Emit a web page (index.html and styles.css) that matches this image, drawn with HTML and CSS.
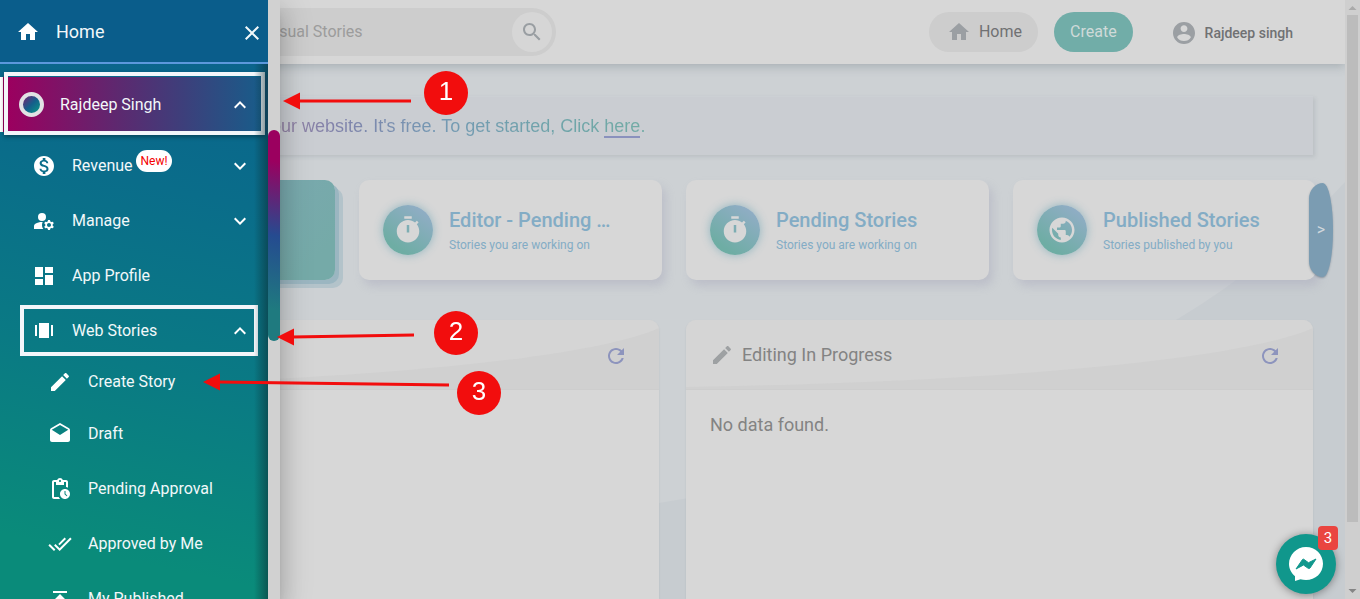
FILE: index.html
```html
<!DOCTYPE html>
<html lang="en">
<head>
<meta charset="utf-8">
<meta name="viewport" content="width=device-width, initial-scale=1">
<title>Visual Stories</title>
<link rel="stylesheet" href="styles.css">
</head>
<body>
<svg class="defs" aria-hidden="true">
  <symbol id="home" viewBox="0 0 24 24"><path d="M10 20v-6h4v6h5v-8h3L12 3 2 12h3v8z"/></symbol>
  <symbol id="up" viewBox="0 0 24 24"><path d="M12 8l-6 6 1.410 1.410L12 10.830l4.590 4.580L18 14z"/></symbol>
  <symbol id="down" viewBox="0 0 24 24"><path d="M16.590 8.590L12 13.170 7.410 8.590 6 10l6 6 6-6z"/></symbol>
  <symbol id="pencil" viewBox="0 0 24 24"><path d="M3 17.250V21h3.750L17.810 9.940l-3.750-3.750L3 17.250zM20.710 7.040c.39-.39.39-1.020 0-1.410l-2.340-2.340c-.39-.39-1.020-.39-1.410 0l-1.830 1.830 3.750 3.750 1.830-1.830z"/></symbol>
  <symbol id="refresh" viewBox="0 0 24 24"><path d="M17.650 6.350C16.200 4.900 14.210 4 12 4c-4.420 0-7.990 3.580-7.990 8s3.570 8 7.990 8c3.730 0 6.840-2.550 7.730-6h-2.080c-.82 2.330-3.040 4-5.650 4-3.310 0-6-2.690-6-6s2.690-6 6-6c1.660 0 3.140.69 4.220 1.780L13 11h7V4l-2.350 2.350z"/></symbol>
  <symbol id="timer" viewBox="0 0 24 24"><path fill-rule="evenodd" d="M15 1H9v2h6V1zm-4 13h2V8h-2v6zm8.030-6.610l1.420-1.420c-.43-.51-.9-.99-1.410-1.410l-1.420 1.420C16.070 4.740 14.120 4 12 4c-4.970 0-9 4.030-9 9s4.020 9 9 9 9-4.030 9-9c0-2.120-.74-4.070-1.970-5.610z"/></symbol>
  <symbol id="globe" viewBox="0 0 24 24"><path d="M12 2C6.480 2 2 6.480 2 12s4.480 10 10 10 10-4.480 10-10S17.520 2 12 2zm-1 17.930c-3.950-.49-7-3.850-7-7.930 0-.62.080-1.210.21-1.790L9 15v1c0 1.100.9 2 2 2v1.930zm6.900-2.540c-.26-.81-1-1.390-1.900-1.390h-1v-3c0-.55-.45-1-1-1H8v-2h2c.55 0 1-.45 1-1V7h2c1.100 0 2-.9 2-2v-.41c2.930 1.190 5 4.060 5 7.410 0 2.080-.8 3.970-2.100 5.390z"/></symbol>
</svg>

<div class="app">
  <div class="page">
    <header class="topbar">
      <form class="search" role="search">
        <input class="search-input" type="text" placeholder="Search Visual Stories" aria-label="Search Visual Stories">
        <button class="search-button" type="button" aria-label="Search">
          <svg class="icon" viewBox="0 0 24 24"><path d="M15.500 14h-.79l-.28-.27C15.410 12.590 16 11.110 16 9.500 16 5.910 13.090 3 9.500 3S3 5.910 3 9.500 5.910 16 9.500 16c1.610 0 3.090-.59 4.230-1.570l.27.28v.79l5 4.990L20.490 19l-4.990-5zm-6 0C7.010 14 5 11.990 5 9.500S7.010 5 9.500 5 14 7.010 14 9.500 11.990 14 9.500 14z"/></svg>
        </button>
      </form>
      <nav class="top-actions">
        <a class="pill pill-home" href="#"><svg class="icon"><use href="#home"/></svg>Home</a>
        <button class="pill create" type="button">Create</button>
        <a class="user" href="#">
          <svg class="icon" viewBox="0 0 24 24"><path d="M12 1C5.900 1 1 5.900 1 12s4.900 11 11 11 11-4.900 11-11S18.100 1 12 1zm0 3.300c1.900 0 3.400 1.500 3.400 3.400S13.900 11 12 11s-3.400-1.500-3.400-3.400S10.100 4.300 12 4.300zm0 15.700c-2.900 0-5.400-1.400-6.800-3.600 0-2.200 4.500-3.400 6.800-3.400s6.800 1.200 6.800 3.400C17.400 18.600 14.900 20 12 20z"/></svg>
          Rajdeep singh
        </a>
      </nav>
    </header>

    <main class="content">
      <svg class="wave" viewBox="0 0 1345 535" preserveAspectRatio="none" aria-hidden="true"><path d="M1345 118Q1270 200 1176 256C1010 356 850 408 659 439L0 520V535H1345Z"/></svg>
      <section class="banner">
        <p class="banner-text">Show visual stories on your website. It's free. To get started, Click <a class="banner-link" href="#">here</a>.</p>
      </section>

      <section class="slider" aria-label="Story summary">
        <article class="card card-active"></article>
        <article class="card">
          <span class="card-icon"><svg><use href="#timer"/></svg></span>
          <div class="card-body"><h2 class="card-title">Editor - Pending …</h2><p class="card-note">Stories you are working on</p></div>
        </article>
        <article class="card">
          <span class="card-icon"><svg><use href="#timer"/></svg></span>
          <div class="card-body"><h2 class="card-title">Pending Stories</h2><p class="card-note">Stories you are working on</p></div>
        </article>
        <article class="card">
          <span class="card-icon"><svg><use href="#globe"/></svg></span>
          <div class="card-body"><h2 class="card-title">Published Stories</h2><p class="card-note">Stories published by you</p></div>
        </article>
        <button class="next" type="button" aria-label="Next">&gt;</button>
      </section>

      <div class="panels">
        <section class="panel">
          <header class="panel-head">
            <svg class="panel-curve" viewBox="0 0 626 70" preserveAspectRatio="none" aria-hidden="true"><path d="M0 0H626V8C560 38 340 62 0 68Z"/></svg>
            <button class="refresh" type="button" aria-label="Refresh"><svg class="icon"><use href="#refresh"/></svg></button>
          </header>
        </section>
        <section class="panel">
          <header class="panel-head">
            <svg class="panel-curve" viewBox="0 0 626 70" preserveAspectRatio="none" aria-hidden="true"><path d="M0 0H626V8C560 38 340 62 0 68Z"/></svg>
            <h2 class="panel-title"><svg class="icon"><use href="#pencil"/></svg>Editing In Progress</h2>
            <button class="refresh" type="button" aria-label="Refresh"><svg class="icon"><use href="#refresh"/></svg></button>
          </header>
          <p class="panel-empty">No data found.</p>
        </section>
      </div>
    </main>
  </div>

  <div class="scrollbar" aria-hidden="true">
    <svg class="scroll-arrow" viewBox="0 0 15 15"><path d="M3.500 10L7.500 6l4 4z"/></svg>
    <div class="scroll-thumb"></div>
    <svg class="scroll-arrow scroll-arrow-down" viewBox="0 0 15 15"><path d="M3.500 5l4 4 4-4z"/></svg>
  </div>
</div>

<aside class="drawer">
  <div class="drawer-main">
    <header class="drawer-head">
      <a class="drawer-home" href="#"><svg class="icon"><use href="#home"/></svg>Home</a>
      <button class="drawer-close" type="button" aria-label="Close menu"><svg class="icon" viewBox="0 0 24 24"><path d="M19 6.410L17.590 5 12 10.590 6.410 5 5 6.410 10.590 12 5 17.590 6.410 19 12 13.410 17.590 19 19 17.590 13.410 12z"/></svg></button>
    </header>
    <nav class="menu">
      <button class="item item-user ring" type="button"><span class="avatar"></span><span class="label">Rajdeep Singh</span><svg class="icon"><use href="#up"/></svg></button>
      <button class="item" type="button">
        <svg class="icon" viewBox="0 0 24 24"><path d="M12 2C6.480 2 2 6.480 2 12s4.480 10 10 10 10-4.480 10-10S17.520 2 12 2zm1.410 16.090V20h-2.670v-1.930c-1.710-.36-3.160-1.460-3.270-3.400h1.960c.1 1.050.82 1.870 2.650 1.870 1.960 0 2.400-.98 2.400-1.590 0-.83-.44-1.610-2.670-2.140-2.480-.6-4.180-1.620-4.180-3.670 0-1.720 1.390-2.840 3.110-3.210V4h2.670v1.950c1.860.45 2.790 1.860 2.850 3.390H14.300c-.05-1.110-.64-1.870-2.220-1.870-1.500 0-2.400.68-2.400 1.640 0 .84.65 1.390 2.670 1.910s4.180 1.390 4.180 3.910c-.01 1.830-1.380 2.830-3.120 3.160z"/></svg>
        <span class="label">Revenue <span class="new">New!</span></span><svg class="icon"><use href="#down"/></svg>
      </button>
      <button class="item" type="button">
        <svg class="icon" viewBox="0 0 24 24"><circle cx="10" cy="8" r="4"/><path d="M10.670 13.020C10.450 13.010 10.230 13 10 13c-2.420 0-4.680.67-6.610 1.820C2.510 15.340 2 16.320 2 17.350V20h9.260C10.470 18.870 10 17.490 10 16c0-1.070.25-2.070.67-2.980zM20.750 16c0-.22-.03-.42-.06-.63l1.140-1.010-1-1.730-1.450.49c-.32-.27-.68-.48-1.080-.63L18 11h-2l-.3 1.490c-.4.15-.76.36-1.080.63l-1.450-.49-1 1.730 1.140 1.010c-.03.21-.06.41-.06.63s.03.42.06.63l-1.140 1.010 1 1.730 1.450-.49c.32.27.68.48 1.080.63L16 21h2l.3-1.490c.4-.15.76-.36 1.080-.63l1.450.49 1-1.730-1.140-1.010c.03-.21.06-.41.06-.63zM17 18c-1.100 0-2-.9-2-2s.9-2 2-2 2 .9 2 2-.9 2-2 2z"/></svg>
        <span class="label">Manage</span><svg class="icon"><use href="#down"/></svg>
      </button>
      <a class="item" href="#">
        <svg class="icon" viewBox="0 0 24 24"><path d="M3 13h8V3H3v10zm0 8h8v-6H3v6zm10 0h8V11h-8v10zm0-18v6h8V3h-8z"/></svg>
        <span class="label">App Profile</span>
      </a>
      <button class="item ring ring-inset" type="button">
        <svg class="icon" viewBox="0 0 24 24"><path d="M7 4h10v15H7zM3 6h2v11H3zM19 6h2v11h-2z"/></svg>
        <span class="label">Web Stories</span><svg class="icon"><use href="#up"/></svg>
      </button>
      <a class="item sub sub-first" href="#"><svg class="icon"><use href="#pencil"/></svg><span class="label">Create Story</span></a>
      <a class="item sub" href="#">
        <svg class="icon" viewBox="0 0 24 24"><path d="M21.990 8c0-.72-.37-1.350-.94-1.700L12 1 2.950 6.300C2.380 6.650 2 7.280 2 8v10c0 1.100.9 2 2 2h16c1.100 0 2-.9 2-2l-.01-10zM12 13L3.740 7.840 12 3l8.260 4.840L12 13z"/></svg>
        <span class="label">Draft</span>
      </a>
      <a class="item sub" href="#">
        <svg class="icon" viewBox="0 0 24 24"><path d="M17 12c-2.760 0-5 2.240-5 5s2.240 5 5 5 5-2.240 5-5-2.240-5-5-5zm1.650 7.350L16.500 17.200V14h1v2.790l1.850 1.850-.7.71zM18 3h-3.180C14.400 1.840 13.300 1 12 1s-2.400.84-2.820 2H6c-1.100 0-2 .9-2 2v15c0 1.100.9 2 2 2h6.110c-.59-.57-1.070-1.250-1.420-2H6V5h2v3h8V5h2v5.080c.71.1 1.380.31 2 .6V5c0-1.100-.9-2-2-2zm-6 2c-.55 0-1-.45-1-1s.45-1 1-1 1 .45 1 1-.45 1-1 1z"/></svg>
        <span class="label">Pending Approval</span>
      </a>
      <a class="item sub" href="#">
        <svg class="icon" viewBox="0 0 24 24"><path d="M18 7l-1.410-1.410-6.340 6.340 1.410 1.410L18 7zm4.240-1.410L11.660 16.170 7.480 12l-1.410 1.410L11.660 19l12-12-1.420-1.410zM.41 13.410L6 19l1.410-1.410L1.830 12 .41 13.410z"/></svg>
        <span class="label">Approved by Me</span>
      </a>
      <a class="item sub" href="#">
        <svg class="icon" viewBox="0 0 24 24"><path d="M5 4v2h14V4H5zm0 10h4v6h6v-6h4l-7-7-7 7z"/></svg>
        <span class="label">My Published</span>
      </a>
    </nav>
  </div>
  <div class="drawer-scroll" aria-hidden="true"><div class="drawer-thumb"></div></div>
</aside>

<button class="chat" type="button" aria-label="Open chat, 3 unread">
  <svg viewBox="0 0 36 36"><path fill="#fff" d="M18 1C8.600 1 1 8.600 1 18c0 4.800 2.400 9.200 6 12.200V35l5.500-1.800C14.200 33.700 16 34 18 34c9.400 0 17-7 17-16.300S27.400 1 18 1z"/><path fill="#10978c" stroke="#10978c" stroke-linejoin="round" d="M8 23l6.500-9.500c.5-.5 1-.5 1.500 0l4.500 3.200L28 13l-6 9c-.5.7-1.200.8-1.800.3L15.500 19z"/></svg>
  <span class="chat-count">3</span>
</button>

<div class="notes">
  <svg class="arrows" aria-hidden="true">
    <g stroke="#f20d0d" stroke-width="3"><path d="M298 101H411"/><path d="M292 337L414 335"/><path d="M218 382L449 385"/></g>
    <g fill="#f20d0d"><path d="M283 101l17-8.500v17z"/><path d="M277 337l17-8.500v17z"/><path d="M203 382l17-8.500v17z"/></g>
  </svg>
  <span class="step step-one">1</span>
  <span class="step step-two">2</span>
  <span class="step step-three">3</span>
</div>
</body>
</html>
```
FILE: styles.css
```css
* { box-sizing: border-box; }

body {
  margin: 0;
  overflow: hidden;
  background: #cdd1d4;
  font-family: Roboto, "Liberation Sans", sans-serif;
  font-size: 16px;
  line-height: 24px;
}

h2, p { margin: 0; font-weight: 400; }
a { color: inherit; text-decoration: none; }
button { padding: 0; border: 0; background: none; color: inherit; font: inherit; cursor: pointer; }

.defs { position: absolute; width: 0; height: 0; }
.icon { width: 24px; height: 24px; flex: none; fill: currentColor; }

/* Page */
.app { display: flex; height: 100vh; }
.page { display: flex; flex: 1; flex-direction: column; min-width: 0; overflow: hidden; }

.topbar {
  position: relative;
  z-index: 1;
  display: flex;
  flex: none;
  align-items: center;
  justify-content: space-between;
  height: 64px;
  padding: 0 52px 0 192px;
  background: #d7d7d7;
  box-shadow: 0 2px 10px rgba(70, 85, 95, 0.3);
}

.search {
  display: flex;
  align-items: center;
  width: 364px;
  height: 48px;
  padding: 4px;
  border-radius: 24px;
  background: #cdcdcd;
}
.search-input {
  flex: 1;
  min-width: 0;
  padding: 0 16px;
  border: 0;
  outline: 0;
  background: none;
  color: #9c9c9c;
  font: inherit;
}
.search-input::placeholder { color: #9c9c9c; }
.search-button {
  display: grid;
  place-items: center;
  width: 40px;
  height: 40px;
  border-radius: 50%;
  background: #d6d6d6;
  color: #999ea2;
}

.top-actions { display: flex; align-items: center; gap: 16px; color: #707173; }
.top-actions .icon { color: #9b9fa3; }
.pill {
  display: flex;
  align-items: center;
  gap: 8px;
  height: 40px;
  padding: 0 16px;
  border-radius: 20px;
  background: #cdcdcd;
}
.pill-home { padding-left: 18px; }
.create { background: #71ada8; color: #cfdad9; }
.user {
  display: flex;
  align-items: center;
  gap: 9px;
  margin-left: 23px;
  padding-top: 2px;
  font-size: 14px;
  font-weight: 500;
}

.content {
  position: relative;
  display: flex;
  flex: 1;
  flex-direction: column;
  padding: 32px 32px 0;
}
.wave { position: absolute; inset: 0; width: 100%; height: 100%; fill: #c7ccd0; }

.banner {
  position: relative;
  flex: none;
  margin-bottom: 25px;
  padding: 16px 46px;
  border-top: 1px solid #ccd0d4;
  background: #cacdd2;
  box-shadow: 2px 2px 4px rgba(120, 125, 135, 0.2);
}
.banner-text {
  width: fit-content;
  background: linear-gradient(90deg, #9a7c9d 30%, #8083ab 46%, #7499b3 64%, #6fa4a9 85%, #72aba5);
  background-clip: text;
  color: transparent;
  font: 18px/26px "Liberation Sans", Arial, sans-serif;
}
.banner-link { border-bottom: 2px solid #8a91bd; }

.slider { position: relative; display: flex; flex: none; gap: 24px; margin-bottom: 40px; }
.card {
  display: flex;
  flex: none;
  align-items: center;
  gap: 16px;
  width: 303px;
  height: 100px;
  padding: 0 24px;
  border-radius: 10px;
  background: #d7d7d7;
  box-shadow: 4px 6px 8px rgba(165, 165, 185, 0.4);
}
.card-active {
  background: linear-gradient(135deg, #82a6ba, #75aaa8 90%);
  box-shadow: 4px 4px 0 #9bb6c1, 8px 8px 0 #b3c3ca;
}
.card-icon {
  display: grid;
  flex: none;
  place-items: center;
  width: 50px;
  height: 50px;
  border-radius: 50%;
  background: linear-gradient(215deg, #8fadc4 15%, #6eada4 80%);
  box-shadow: 0 0 10px #90b6c0;
}
.card-icon svg { width: 30px; height: 30px; fill: #d7d7d7; }
.card-body { color: #83acc5; }
.card-title {
  font-size: 20px;
  font-weight: 500;
  line-height: 30px;
  white-space: nowrap;
}
.card-note { font-size: 12px; line-height: 21px; }
.next {
  position: absolute;
  top: 3px;
  right: -20px;
  width: 24px;
  height: 94px;
  border-radius: 14px 10px 10px 14px / 16px 47px 47px 16px;
  background: #7b9cb2;
  box-shadow: 0 1px 2px rgba(50, 70, 90, 0.4);
  color: #d0d7dc;
  font-size: 16px;
}

.panels { position: relative; display: flex; flex: 1; gap: 27px; }
.panel {
  flex: 1;
  overflow: hidden;
  border-radius: 10px 10px 0 0;
  background: #d7d7d7;
  box-shadow: 0 1px 2px rgba(110, 120, 130, 0.2);
}
.panel-head {
  position: relative;
  display: flex;
  align-items: center;
  height: 70px;
  padding: 0 31px 0 24px;
  border-bottom: 1px solid #cdcdcd;
  background: #d0d0d0;
}
.panel-curve { position: absolute; inset: 0; width: 100%; height: 100%; fill: #d5d5d5; }
.panel-title {
  position: relative;
  display: flex;
  align-items: center;
  gap: 8px;
  color: #838383;
  font-size: 18px;
}
.panel-title .icon { color: #9ea1a3; }
.refresh { position: relative; display: flex; margin-left: auto; padding-top: 2px; color: #8d94bd; }
.panel-empty { padding: 23px 24px; color: #838383; font-size: 18px; }

.scrollbar {
  display: flex;
  flex: none;
  flex-direction: column;
  align-items: center;
  width: 15px;
  background: #cfcfcf;
}
.scroll-arrow { width: 15px; height: 15px; flex: none; fill: #aaa; }
.scroll-arrow-down { margin-top: auto; fill: #858585; }
.scroll-thumb { width: 11px; height: 89%; max-height: 507px; background: #bcbcbc; }

/* Drawer */
.drawer {
  position: fixed;
  z-index: 2;
  inset: 0 auto 0 0;
  display: flex;
  box-shadow: 0 8px 10px -5px rgba(0, 0, 0, 0.2), 0 16px 24px 2px rgba(0, 0, 0, 0.14), 0 6px 30px 5px rgba(0, 0, 0, 0.12);
  color: #f2f8fa;
}
.drawer-main {
  position: relative;
  width: 268px;
  overflow: hidden;
  background: linear-gradient(192deg, #0a648c 10%, #0a6d8a 32%, #0a7a84 60%, #0a8b7a 90%);
}
.drawer-main::after {
  position: absolute;
  inset: 64px 0 0 auto;
  width: 14px;
  background: linear-gradient(90deg, transparent, rgba(10, 45, 50, 0.55));
  content: "";
  pointer-events: none;
}
.drawer-head {
  display: flex;
  align-items: center;
  justify-content: space-between;
  height: 64px;
  padding: 2px 4px 0 16px;
  border-bottom: 2px solid #5b98dc;
  background: #0a5d8b;
}
.drawer-home { display: flex; align-items: center; gap: 16px; font-size: 18px; }
.drawer-home .icon, .menu .icon { fill: #fff; }
.drawer-close { display: flex; margin-top: 2px; }

.menu { display: flex; flex-direction: column; padding-top: 13px; }
.item {
  position: relative;
  display: flex;
  flex: none;
  align-items: center;
  gap: 16px;
  height: 55px;
  padding: 0 16px 0 32px;
  text-align: left;
}
.label { flex: 1; white-space: nowrap; }
.item-user {
  margin-bottom: 6px;
  padding-left: 16px;
  border-left: 3px solid #fff;
  background: linear-gradient(90deg, #9b005f 2%, #5b2a70 45%, #3d3f7b 68%, #155f8b);
}
.avatar {
  width: 25px;
  height: 25px;
  border: 4px solid #e2e2e4;
  border-radius: 50%;
  background: linear-gradient(135deg, #7a2070, #155f8b 50%, #0a9a86);
}
.ring::after {
  position: absolute;
  inset: -5px 3px -3px 1px;
  border: 4px solid #f3f6fa;
  box-shadow: 0 2px 4px rgba(0, 0, 0, 0.35);
  content: "";
}
.ring-inset::after { inset: 2px 10px 2px 20px; box-shadow: none; }
.new {
  display: inline-block;
  margin: -4px 0;
  padding: 0 4px;
  border-radius: 11px;
  background: #fff;
  color: #f40000;
  font-size: 12px;
  line-height: 22px;
  vertical-align: 6px;
}
.sub { padding-left: 48px; }
.sub-first { height: 48px; }

.drawer-scroll { width: 12px; padding-top: 130px; background: #d1d1d1; }
.drawer-thumb {
  height: 211px;
  border-radius: 6px;
  background: linear-gradient(190deg, #9b005f 15%, #254b90 50%, #1f7a7f 85%);
}

/* Chat launcher */
.chat {
  position: fixed;
  z-index: 3;
  right: 24px;
  bottom: 5px;
  display: grid;
  place-items: center;
  width: 60px;
  height: 60px;
  border-radius: 50%;
  background: #10978c;
  box-shadow: 0 1px 8px rgba(0, 0, 0, 0.4);
}
.chat svg { width: 36px; height: 36px; }
.chat-count {
  position: absolute;
  top: -8px;
  right: -2px;
  width: 20px;
  border-radius: 4px;
  background: #ea4540;
  color: #fff;
  font-size: 15px;
  line-height: 24px;
  text-align: center;
}

/* Walkthrough markers */
.notes { position: fixed; z-index: 4; inset: 0; pointer-events: none; }
.arrows { width: 100%; height: 100%; }
.step {
  position: absolute;
  width: 44px;
  height: 44px;
  border-radius: 50%;
  background: #f20d0d;
  color: #fff;
  font: 26px/40px "Liberation Sans", Arial, sans-serif;
  text-align: center;
}
.step-one { left: 424px; top: 71px; }
.step-two { left: 434px; top: 311px; }
.step-three { left: 457px; top: 371px; }
```
